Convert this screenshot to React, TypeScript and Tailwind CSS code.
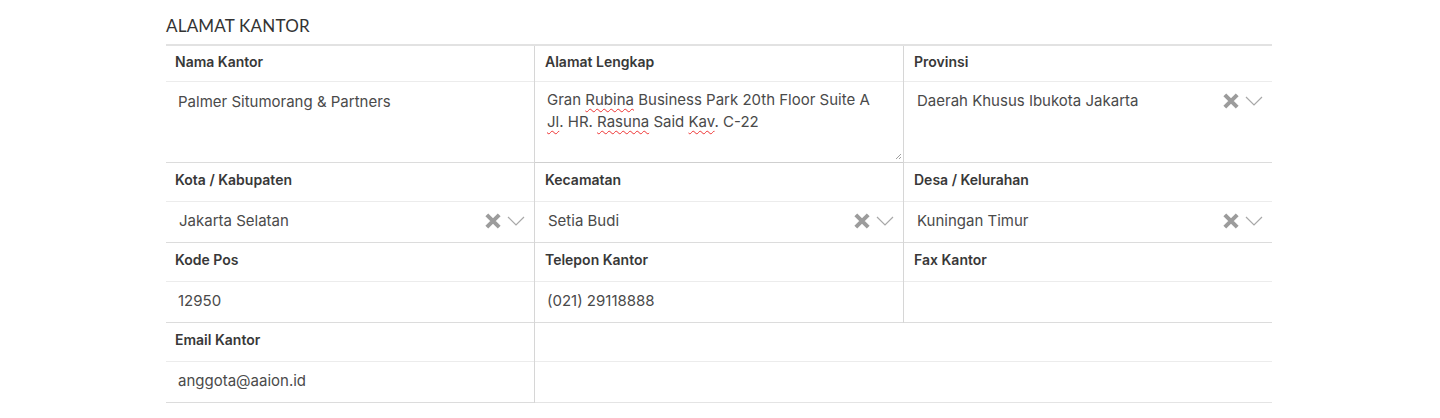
import React from "react";

function ClearIcon() {
    return (
        <svg width="16" height="16" viewBox="0 0 16 16" className="shrink-0">
            <path d="M1.8 1.8 L14.2 14.2 M14.2 1.8 L1.8 14.2" stroke="#9c9c9c" strokeWidth="4" />
        </svg>
    );
}

function ChevronIcon() {
    return (
        <svg width="18" height="10" viewBox="0 0 18 10" className="shrink-0">
            <path d="M1 1 L9 9 L17 1" fill="none" stroke="#a8a8a8" strokeWidth="1.2" />
        </svg>
    );
}

function Label({ text, first, border }: { text: string; first?: boolean; border?: boolean }) {
    return (
        <div
            className={`flex items-center pl-[9px] pb-[5px] border-b border-[#ececec] text-[14px] font-semibold text-[#383838] ${
                first ? "h-[36px]" : "h-[39px]"
            } ${border ? "pl-[10px]" : ""}`}
        >
            {text}
        </div>
    );
}

function TextValue({ value }: { value: string }) {
    return (
        <div className="flex items-center h-[41px] pl-[12px] pb-[2px] border-b border-[#dcdcdc] text-[15px] text-[#4a4a4a]">
            {value}
        </div>
    );
}

function SelectValue({ value, tall }: { value: string; tall?: boolean }) {
    return (
        <div
            className={`flex justify-between pl-[13px] pr-[9px] border-b border-[#dcdcdc] text-[15px] text-[#4a4a4a] ${
                tall ? "h-[81px] items-start pt-[8px]" : "h-[41px] items-center pb-[2px]"
            }`}
        >
            <span>{value}</span>
            <span className={`flex items-center gap-[6px] ${tall ? "pt-[3px]" : ""}`}>
                <ClearIcon />
                <ChevronIcon />
            </span>
        </div>
    );
}

function Squiggle({ children }: { children: React.ReactNode }) {
    return <span className="underline decoration-wavy decoration-[#e33] decoration-1 underline-offset-[3px]">{children}</span>;
}

function App() {
    return (
        <div className="bg-white w-[1440px] h-[418px] font-['Inter',sans-serif]">
            <div className="w-[1106px] ml-[166px] pt-[15px]">
                <h2 className="font-['Lato',sans-serif] text-[17px] tracking-[0.2px] text-[#333] leading-[22px] mb-[7px]">
                    ALAMAT KANTOR
                </h2>
                <div className="border-t-2 border-[#e2e2e2] grid grid-cols-[368px_369px_369px]">
                    {/* row 1 */}
                    <div>
                        <Label text="Nama Kantor" first />
                        <div className="h-[81px] pl-[12px] pt-[9px] border-b border-[#dcdcdc] text-[15px] text-[#4a4a4a]">
                            Palmer Situmorang &amp; Partners
                        </div>
                    </div>
                    <div className="border-l border-[#d6d6d6]">
                        <Label text="Alamat Lengkap" first border />
                        <div className="relative h-[81px] pl-[12px] pt-[7px] border-b border-[#cfcfcf] text-[15px] leading-[22px] text-[#4a4a4a]">
                            <div>
                                Gran <Squiggle>Rubina</Squiggle> Business Park 20th Floor Suite A
                            </div>
                            <div>
                                <Squiggle>Jl</Squiggle>. HR. <Squiggle>Rasuna</Squiggle> Said <Squiggle>Kav</Squiggle>. C-22
                            </div>
                            <svg width="7" height="7" viewBox="0 0 7 7" className="absolute right-[1px] bottom-[2px]">
                                <path d="M6 1 L1 6 M6 4 L4 6" stroke="#888" strokeWidth="0.8" />
                            </svg>
                        </div>
                    </div>
                    <div className="border-l border-[#d6d6d6]">
                        <Label text="Provinsi" first border />
                        <SelectValue value="Daerah Khusus Ibukota Jakarta" tall />
                    </div>

                    {/* row 2 */}
                    <div>
                        <Label text="Kota / Kabupaten" />
                        <SelectValue value="Jakarta Selatan" />
                    </div>
                    <div className="border-l border-[#d6d6d6]">
                        <Label text="Kecamatan" border />
                        <SelectValue value="Setia Budi" />
                    </div>
                    <div className="border-l border-[#d6d6d6]">
                        <Label text="Desa / Kelurahan" border />
                        <SelectValue value="Kuningan Timur" />
                    </div>

                    {/* row 3 */}
                    <div>
                        <Label text="Kode Pos" />
                        <TextValue value="12950" />
                    </div>
                    <div className="border-l border-[#d6d6d6]">
                        <Label text="Telepon Kantor" border />
                        <TextValue value="(021) 29118888" />
                    </div>
                    <div className="border-l border-[#d6d6d6]">
                        <Label text="Fax Kantor" border />
                        <TextValue value="" />
                    </div>

                    {/* row 4 */}
                    <div>
                        <Label text="Email Kantor" />
                        <TextValue value="anggota@aaion.id" />
                    </div>
                    <div className="col-span-2 border-l border-[#d6d6d6]">
                        <div className="h-[39px] border-b border-[#ececec]" />
                        <div className="h-[41px] border-b border-[#e4e4e4]" />
                    </div>
                </div>
            </div>
        </div>
    );
}

export default App;
